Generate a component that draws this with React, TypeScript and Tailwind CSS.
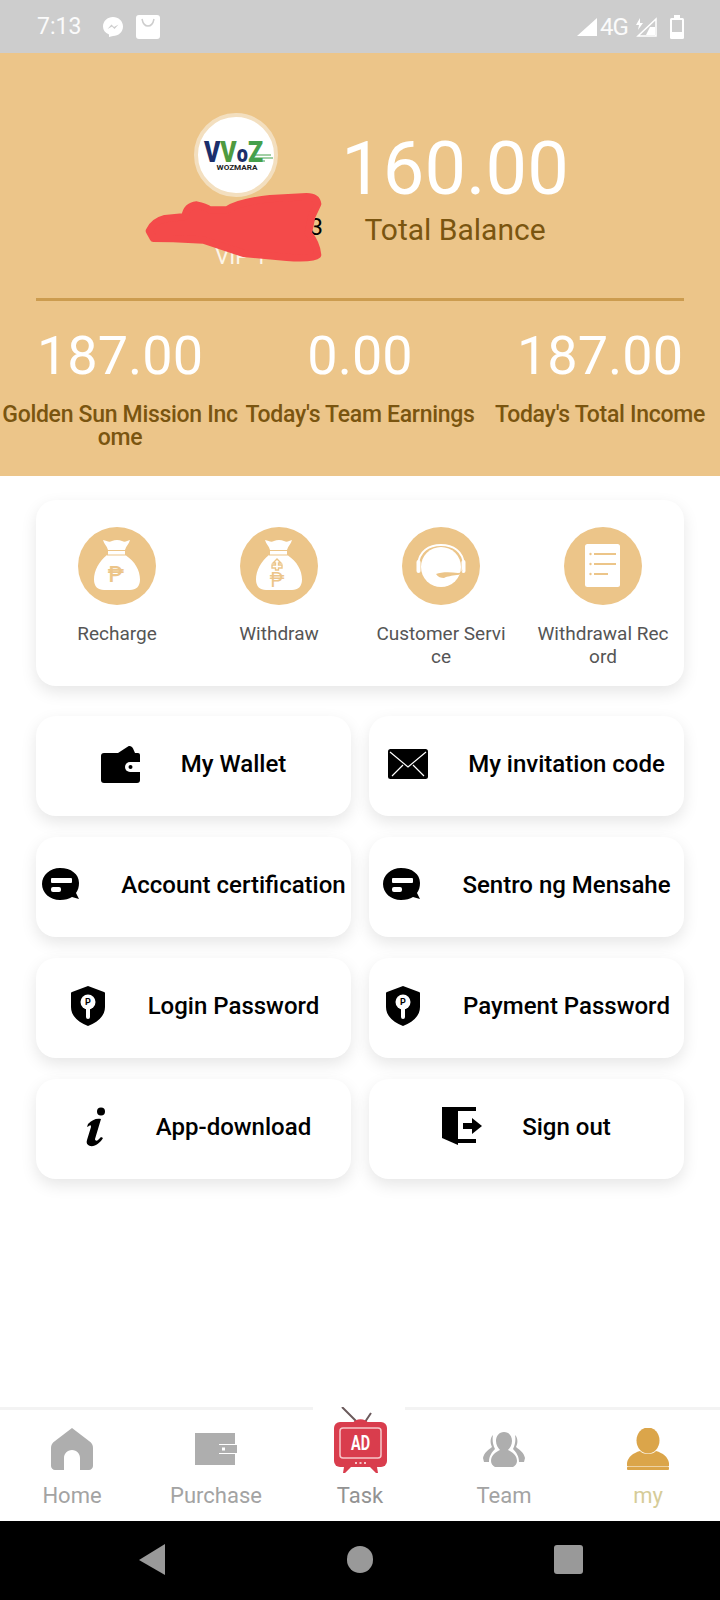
import React from "react";

const TAN = "#ecc589";

function BagIcon({ withdraw }: { withdraw?: boolean }) {
  return (
    <svg width="78" height="78" viewBox="0 0 78 78">
      <circle cx="39" cy="39" r="39" fill={TAN} />
      <path d="M25 13c4 1 6 2.500 9 1 3-1.500 7-1.500 10 0 3 1.500 5 0 8-1-1 4-4 6-5 10H30c-1-4-4-6-5-10z" fill="#fff" />
      <path d="M30 24h17v3.500H30z" fill="#fff" />
      <path d="M29 28.500h19c9 6 14 15 14 24 0 7-4 10.500-10 10.500H26c-6 0-10-3.500-10-10.500 0-9 5-18 13-24.500z" fill="#fff" />
      {withdraw ? (
        <>
          <path d="M37 32l4 4h-2.500v2H42v3h-3.500v2h-3v-2H32v-3h3.500v-2H33z" fill="none" stroke={TAN} strokeWidth="1.400" />
          <text x="37" y="60" textAnchor="middle" fontFamily="Roboto, sans-serif" fontSize="20" fill={TAN}>₱</text>
        </>
      ) : (
        <text x="38" y="55" textAnchor="middle" fontFamily="Roboto, sans-serif" fontSize="22" fontWeight="500" fill={TAN}>₱</text>
      )}
    </svg>
  );
}

function HeadsetIcon() {
  return (
    <svg width="78" height="78" viewBox="0 0 78 78">
      <circle cx="39" cy="39" r="39" fill={TAN} />
      <circle cx="39" cy="40" r="20" fill="#fff" />
      <path d="M16 38C17 24 27 18 39 18s22 6 23 20" fill="none" stroke="#fff" strokeWidth="2" />
      <rect x="14.500" y="33" width="4" height="13" rx="2" fill="#fff" />
      <rect x="59.500" y="33" width="4" height="13" rx="2" fill="#fff" />
      <path d="M34 47c5-2 14-2 22-1 3 0 4-2 5-4-1 4-3 6-6 6-6 1-9 1-13 3-3 0-6-1-8-4z" fill={TAN} />
    </svg>
  );
}

function DocIcon() {
  return (
    <svg width="78" height="78" viewBox="0 0 78 78">
      <circle cx="39" cy="39" r="39" fill={TAN} />
      <rect x="21" y="17" width="35" height="43" rx="2.500" fill="#fff" />
      <g fill={TAN}>
        <circle cx="26.500" cy="27" r="1.200" />
        <circle cx="26.500" cy="37" r="1.200" />
        <circle cx="26.500" cy="47" r="1.200" />
        <rect x="30" y="26" width="22" height="2" />
        <rect x="30" y="36" width="22" height="2" />
        <rect x="30" y="46" width="14" height="2" />
      </g>
    </svg>
  );
}

function WalletIcon() {
  return (
    <svg width="40" height="38" viewBox="0 0 40 38">
      <path d="M17 8L27 1.500c2-1 4 0 5 2L34 8z" fill="#000" />
      <path d="M3 8h34a2 2 0 0 1 2 2v25a3 3 0 0 1-3 3H3a3 3 0 0 1-3-3V11a3 3 0 0 1 3-3z" fill="#000" />
      <path d="M40 17H29a5 5 0 0 0 0 10h11z" fill="#fff" />
      <circle cx="29.500" cy="22" r="2" fill="#000" />
    </svg>
  );
}

function MailIcon() {
  return (
    <svg width="40" height="30" viewBox="0 0 40 30">
      <rect width="40" height="30" rx="2.500" fill="#000" />
      <path d="M2 3l18 15L38 3M4 27l11-11M36 27L25 16" fill="none" stroke="#fff" strokeWidth="1.200" />
    </svg>
  );
}

function ChatIcon() {
  return (
    <svg width="38" height="33" viewBox="0 0 38 33">
      <path d="M18 0c11 0 19 6 19 15 0 4-1 7-3 10l3 6-7-2c-3 2-7 3-12 3C8 32 0 25 0 16 0 7 8 0 18 0z" fill="#000" />
      <rect x="9" y="10" width="21" height="5" rx="1" fill="#fff" />
      <rect x="9" y="19" width="10" height="5" rx="2" fill="#fff" />
    </svg>
  );
}

function ShieldIcon() {
  return (
    <svg width="34" height="40" viewBox="0 0 34 40">
      <path d="M17 0l16 6c1 0 1 1 1 2v13c0 9-7 15-17 19C7 36 0 30 0 21V8c0-1 0-2 1-2z" fill="#000" />
      <circle cx="17" cy="16" r="7.500" fill="#fff" />
      <rect x="15" y="20" width="4" height="13" rx="2" fill="#fff" />
      <text x="17" y="19" textAnchor="middle" fontFamily="Roboto, sans-serif" fontSize="9" fontWeight="700" fill="#000">P</text>
    </svg>
  );
}

function InfoIcon() {
  return (
    <svg width="40" height="40" viewBox="0 0 40 40">
      <circle cx="25" cy="4.500" r="4" fill="#000" />
      <path d="M12 17c4-4 8-6 13-5l-6 20c0 2 2 2 3 1l3-3 2 1c-3 5-8 9-13 8-3-1-4-3-3-6l4-13c0-2-1-2-2-1l-2 1z" fill="#000" />
    </svg>
  );
}

function DoorIcon() {
  return (
    <svg width="40" height="39" viewBox="0 0 40 39">
      <path d="M0 0h34v4H0z" fill="#000" />
      <path d="M0 1h16v37L0 31z" fill="#000" />
      <path d="M16 32h18v4H16z" fill="#000" />
      <path d="M21 16h9v-5l10 8-10 8v-5h-9z" fill="#000" />
    </svg>
  );
}

const actions = [
  { label: "My Wallet", icon: <WalletIcon /> },
  { label: "My invitation code", icon: <MailIcon /> },
  { label: "Account certification", icon: <ChatIcon /> },
  { label: "Sentro ng Mensahe", icon: <ChatIcon /> },
  { label: "Login Password", icon: <ShieldIcon /> },
  { label: "Payment Password", icon: <ShieldIcon /> },
  { label: "App-download", icon: <InfoIcon /> },
  { label: "Sign out", icon: <DoorIcon /> },
];

const quick = [
  { label: "Recharge", icon: <BagIcon /> },
  { label: "Withdraw", icon: <BagIcon withdraw /> },
  { label: "Customer Service", icon: <HeadsetIcon /> },
  { label: "Withdrawal Record", icon: <DocIcon /> },
];

const stats = [
  { value: "187.00", label: "Golden Sun Mission Income" },
  { value: "0.00", label: "Today's Team Earnings" },
  { value: "187.00", label: "Today's Total Income" },
];

function StatusBar() {
  return (
    <div className="h-[53px] bg-[#cdcdcd] flex items-center pl-[37px] pr-[35px] text-[#fbfbfb]">
      <span className="text-[23px] leading-none w-[66px]">7:13</span>
      <svg width="20" height="20" viewBox="0 0 20 20">
        <path d="M10 0c5.500 0 10 4 10 9.500S15.500 19 10 19l-4 1v-2.500C2 16 0 13 0 9.500 0 4 4.500 0 10 0z" fill="#fff" />
        <path d="M4.500 12l4-4.500 2.500 2.500 4.500-2.500-4 4.500-2.500-2.500z" fill="#cdcdcd" />
      </svg>
      <svg className="ml-[13px]" width="24" height="24" viewBox="0 0 24 24">
        <rect width="24" height="24" rx="3" fill="#fff" />
        <path d="M6 4c1 5 3 7 6 7s5-2 6-7" fill="none" stroke="#cdcdcd" strokeWidth="1.500" />
      </svg>
      <div className="flex-1" />
      <svg width="20" height="18" viewBox="0 0 20 18">
        <path d="M0 18L20 0v18z" fill="#fff" />
      </svg>
      <span className="text-[24px] leading-none ml-[3px] w-[30px] tracking-[-1px]">4G</span>
      <svg className="ml-[5px]" width="22" height="20" viewBox="0 0 22 20">
        <path d="M21 2v17H3z" fill="none" stroke="#fff" strokeWidth="1.500" />
        <path d="M5 1L1 8h3l-1 5 5-7H5z" fill="#fff" />
        <path d="M15 10l5 0v8h-9z" fill="#fff" />
      </svg>
      <svg className="ml-[12px]" width="16" height="24" viewBox="0 0 16 24">
        <rect x="5" y="0" width="6" height="3" fill="#fff" />
        <rect x="1" y="3" width="14" height="21" rx="1.500" fill="#fff" />
        <rect x="3" y="5" width="10" height="12" fill="#cdcdcd" />
      </svg>
    </div>
  );
}

function Logo() {
  return (
    <div className="w-[84px] h-[84px] rounded-full bg-white border-[4px] border-[#f3dfbf] flex flex-none items-center justify-center">
      <svg width="74" height="44" viewBox="0 0 74 44" style={{ fontFamily: "Roboto, sans-serif" }}>
        <text x="5" y="29" fontWeight="900" textLength="59" lengthAdjust="spacingAndGlyphs" fontSize="30">
          <tspan fill="#1c2f6b">V</tspan>
          <tspan fill="#4f9a3f">V</tspan>
          <tspan fill="#1c2f6b" fontSize="24">o</tspan>
          <tspan fill="#45a04c">Z</tspan>
        </text>
        <path d="M56 22h16M54 25h20M52 28h14" stroke="#45a04c" strokeWidth="1" />
        <text x="38" y="37" textAnchor="middle" fontSize="7" fontWeight="700" fill="#222" textLength="41" lengthAdjust="spacingAndGlyphs">WOZMARA</text>
      </svg>
    </div>
  );
}

function Header() {
  return (
    <div className="h-[423px] bg-[#ecc589] relative flex flex-col">
      <div className="flex pl-[136px] pt-[60px] h-[245px]">
        <div className="w-[200px] flex flex-col items-center">
          <Logo />
          <div className="w-full text-right pr-[13px] mt-[15px] text-[24px] leading-[30px] text-black">3</div>
          <div className="ml-[10px] text-[22px] leading-[30px] text-[#fdf6e9]">VIP 1</div>
        </div>
        <div className="w-[238px] flex flex-col items-center pt-[20px]">
          <div className="text-[74px] leading-[72px] text-white whitespace-nowrap">160.00</div>
          <div className="text-[30px] leading-[34px] mt-[8px] text-[#7a5510] whitespace-nowrap">Total Balance</div>
        </div>
      </div>
      <div className="mx-[36px] h-[3px] bg-[#cc9c4f]" />
      <div className="grid grid-cols-3 mt-[28px]">
        {stats.map((s, i) => (
          <div key={i} className="flex flex-col items-center text-center px-[1px]">
            <div className="text-[54px] leading-[54px] text-white">{s.value}</div>
            <div className="mt-[20px] text-[23px] leading-[23px] font-medium text-[#7a5510] break-all tracking-[-0.3px]">{s.label}</div>
          </div>
        ))}
      </div>
      <svg className="absolute left-[130px] top-[47px]" width="220" height="180" viewBox="0 0 660 540">
        <path
          d="M58 393Q70 365 105 356L165 350Q170 318 200 315Q225 320 240 330L290 330Q330 305 420 296L530 290Q560 290 563 312L545 350L535 400Q560 430 563 465Q550 478 470 472L340 460L220 420L130 416L70 415Z"
          fill="#f44a4a"
          stroke="#f44a4a"
          strokeWidth="22"
          strokeLinejoin="round"
        />
      </svg>
    </div>
  );
}

function QuickCard() {
  return (
    <div className="h-[186px] rounded-[20px] bg-white shadow-[0_6px_16px_rgba(0,0,0,0.1)] grid grid-cols-4 pt-[27px]">
      {quick.map((q) => (
        <div key={q.label} className="flex flex-col items-center">
          {q.icon}
          <div className="mt-[17px] w-[136px] text-center text-[19px] leading-[23px] text-[#555] break-all">{q.label}</div>
        </div>
      ))}
    </div>
  );
}

function NavHome() {
  return (
    <svg width="42" height="42" viewBox="0 0 42 42">
      <path d="M21 0l17 13c3 2 4 4 4 7v18c0 2-2 4-4 4H29V30c0-4-3-8-8-8s-8 4-8 8v12H4c-2 0-4-2-4-4V20c0-3 1-5 4-7z" fill="#aeaeae" />
    </svg>
  );
}

function NavWallet() {
  return (
    <svg width="42" height="32" viewBox="0 0 42 32">
      <path fillRule="evenodd" d="M0 0h40v11H24v10h16v11H0z" fill="#aeaeae" />
      <path d="M24 12h18v8H24z" fill="#aeaeae" />
      <rect x="27" y="14.500" width="3" height="3" fill="#fff" />
    </svg>
  );
}

function NavTeam() {
  return (
    <svg width="42" height="35" viewBox="0 0 42 35">
      <path d="M10 3c-3 3-3 8-1 12-4 3-8 6-9 11l1 4h5c0-6 3-10 6-13-2-4-3-9-2-14zM32 3c3 3 3 8 1 12 4 3 8 6 9 11l-1 4h-5c0-6-3-10-6-13 2-4 3-9 2-14z" fill="#aeaeae" />
      <path d="M21 0c5 0 8 4 8 9 0 4-2 7-4 9 4 2 9 5 9 11 0 3-2 5-4 6H12c-2-1-4-3-4-6 0-6 5-9 9-11-2-2-4-5-4-9 0-5 3-9 8-9z" fill="#aeaeae" />
    </svg>
  );
}

function NavUser() {
  return (
    <svg width="42" height="42" viewBox="0 0 42 42">
      <ellipse cx="21" cy="12.500" rx="11.500" ry="13" fill="#dba54a" />
      <path d="M13 23c3 4 13 4 16 0 7 2 12 6 13 12v3H0v-3c1-6 6-10 13-12z" fill="#dba54a" />
      <rect y="38.500" width="42" height="3.500" rx="1" fill="#dba54a" />
    </svg>
  );
}

function NavTv() {
  return (
    <svg className="-mt-[21px] -mb-[3px]" width="53" height="66" viewBox="0 0 53 66" style={{ fontFamily: "Roboto, sans-serif" }}>
      <path d="M8 0l14 14M37 6l-6 9" stroke="#6b5a5c" strokeWidth="2" />
      <path d="M19 16c2-5 13-5 15 0z" fill="#d93d4d" />
      <rect y="15" width="53" height="45" rx="6" fill="#d93d4d" />
      <path d="M10 60h7l-6 6H9zM43 60h-7l6 6h2z" fill="#d93d4d" />
      <rect x="6" y="21" width="41" height="30" rx="3" fill="none" stroke="#f6c6c9" strokeWidth="1.500" />
      <text x="26.500" y="43" textAnchor="middle" fontSize="21" fontWeight="700" fill="#fff" textLength="19" lengthAdjust="spacingAndGlyphs">AD</text>
      <rect x="21" y="55" width="2" height="2" fill="#f6c6c9" />
      <rect x="25.500" y="55" width="2" height="2" fill="#f6c6c9" />
      <rect x="30" y="55" width="2" height="2" fill="#f6c6c9" />
    </svg>
  );
}

const nav = [
  { label: "Home", icon: <NavHome />, color: "text-[#a3a3a3]" },
  { label: "Purchase", icon: <NavWallet />, color: "text-[#a3a3a3]" },
  { label: "Task", icon: <NavTv />, color: "text-[#929292]" },
  { label: "Team", icon: <NavTeam />, color: "text-[#a3a3a3]" },
  { label: "my", icon: <NavUser />, color: "text-[#d6cc98]" },
];

function BottomNav() {
  return (
    <div className="relative h-[114px] bg-white border-t-[3px] border-[#f3f3f3] grid grid-cols-5 pt-[18px]">
      <div className="absolute left-[313px] -top-[5px] w-[92px] h-[8px] bg-white" />
      {nav.map((n) => (
        <div key={n.label} className="relative flex flex-col items-center">
          <div className="h-[42px] flex items-center justify-center">{n.icon}</div>
          <div className={`mt-[12px] text-[22px] leading-[28px] ${n.color}`}>{n.label}</div>
        </div>
      ))}
    </div>
  );
}

function SystemNav() {
  return (
    <div className="h-[79px] bg-black grid grid-cols-3 items-center pb-[2px] px-[48px]">
      <div className="flex justify-center">
        <svg width="26" height="31" viewBox="0 0 26 31">
          <path d="M26 0v31L0 16z" fill="#999" />
        </svg>
      </div>
      <div className="flex justify-center">
        <div className="w-[26px] h-[27px] rounded-full bg-[#999]" />
      </div>
      <div className="flex justify-center">
        <div className="w-[29px] h-[29px] rounded-[3px] bg-[#999]" />
      </div>
    </div>
  );
}

export default function App() {
  return (
    <div className="w-[720px] h-[1600px] bg-white flex flex-col overflow-hidden" style={{ fontFamily: "Roboto, 'Liberation Sans', sans-serif" }}>
      <StatusBar />
      <Header />
      <main className="flex-1 px-[36px] pt-[24px]">
        <QuickCard />
        <div className="grid grid-cols-2 gap-x-[18px] gap-y-[21px] mt-[30px]">
          {actions.map((a) => (
            <div key={a.label} className="h-[100px] rounded-[20px] bg-white shadow-[0_6px_16px_rgba(0,0,0,0.1)] flex items-center justify-center gap-[40px] pb-[5px]">
              <div className="w-[40px] flex flex-none justify-center">{a.icon}</div>
              <span className="text-[24px] font-medium text-black whitespace-nowrap">{a.label}</span>
            </div>
          ))}
        </div>
      </main>
      <BottomNav />
      <SystemNav />
    </div>
  );
}
